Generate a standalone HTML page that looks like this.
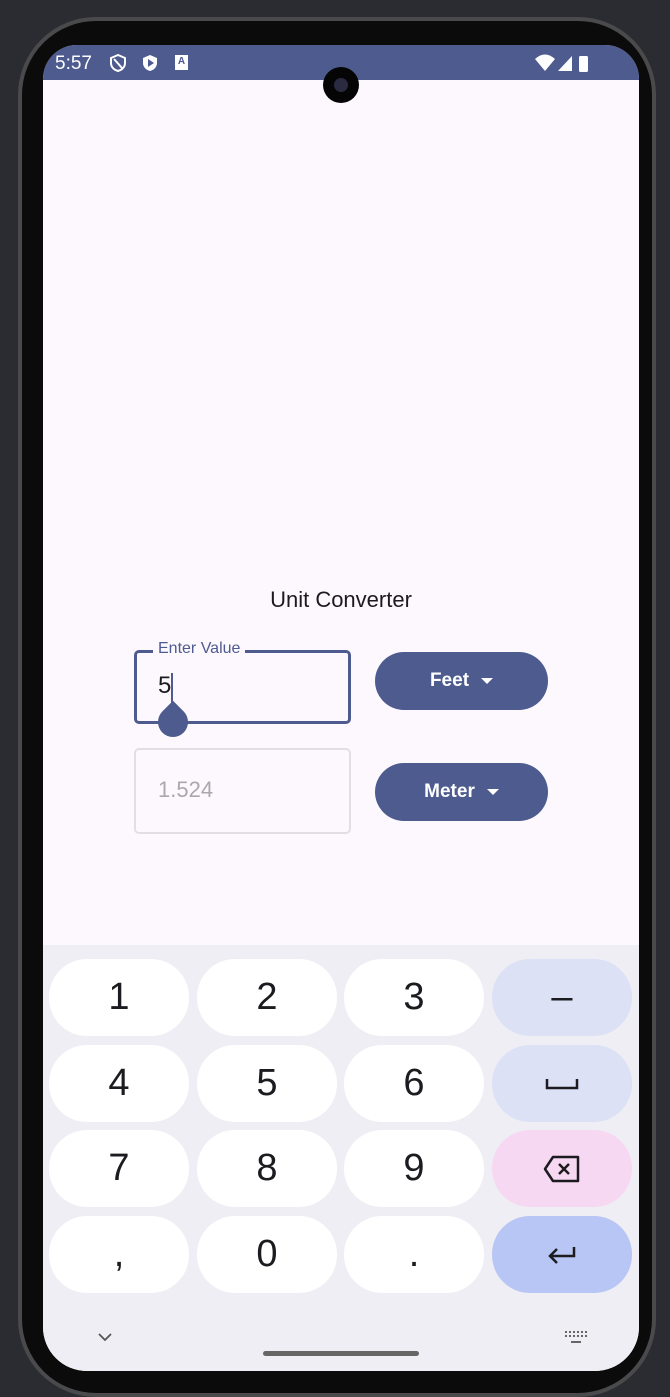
<!DOCTYPE html>
<html><head><style>
body{margin:0;width:670px;height:1396px;background:#2b2c31;position:relative;overflow:hidden;font-family:"Liberation Sans",sans-serif}
.frame{position:absolute;left:18px;top:17px;width:638px;height:1380px;border-radius:78px;background:#0b0b0c;border:4px solid #4a4a4c;box-sizing:border-box}
.screen{position:absolute;left:43px;top:45px;width:596px;height:1326px;border-radius:34px 34px 44px 44px;overflow:hidden;background:#fdf8fd}
.sb{position:absolute;left:0;top:0;width:596px;height:35px;background:#4d5b8f;color:#fff}
.kb{position:absolute;left:0;top:900px;width:596px;height:426px;background:#efeef4}
.k{position:absolute;width:140px;height:77px;border-radius:38px;background:#fff;display:flex;align-items:center;justify-content:center;font-size:38px;color:#1c1b1f}
.btn{position:absolute;left:332px;width:173px;height:58px;border-radius:29px;background:#4d5b8f;color:#fff;font-size:19px;font-weight:bold;display:flex;align-items:center;justify-content:center}
.tri{display:inline-block;margin-left:12px;border-left:6px solid transparent;border-right:6px solid transparent;border-top:6px solid #fff}
</style></head><body>
<div class="frame"></div>
<div class="screen">
 <div class="sb">
  <span style="position:absolute;left:12px;top:8px;font-size:19px">5:57</span>
  <svg style="position:absolute;left:66px;top:9px" width="18" height="18" viewBox="0 0 18 18"><path d="M9 1L2 4v5c0 4 3 7 7 8 4-1 7-4 7-8V4z" fill="none" stroke="#fff" stroke-width="2"/><path d="M5 5l8 9" stroke="#fff" stroke-width="2"/></svg>
  <svg style="position:absolute;left:98px;top:9px" width="18" height="18" viewBox="0 0 18 18"><path d="M9 1L2 4v5c0 4 3 7 7 8 4-1 7-4 7-8V4z" fill="#fff"/><path d="M7 5v8l6-4z" fill="#4d5b8f"/></svg>
  <div style="position:absolute;left:132px;top:10px;width:13px;height:15px;background:#fff;font-size:10px;color:#4d5b8f;font-weight:bold;text-align:center;line-height:14px">A</div>
  <svg style="position:absolute;left:491px;top:8px" width="60" height="20" viewBox="0 0 60 20"><path d="M1 6q10-9 20 0l-10 12z" fill="#fff"/><path d="M24 18L38 3v15z" fill="#fff"/><rect x="45" y="3" width="9" height="16" rx="1.5" fill="#fff"/></svg>
 </div>
 <div style="position:absolute;left:280px;top:22px;width:36px;height:36px;border-radius:50%;background:#050505"><div style="position:absolute;left:11px;top:11px;width:14px;height:14px;border-radius:50%;background:#2a2a40"></div></div>
 <div style="position:absolute;left:0;width:596px;top:542px;text-align:center;font-size:22px;color:#1c1b1f">Unit Converter</div>
 <div style="position:absolute;left:91px;top:605px;width:217px;height:74px;border:3px solid #4d5b8f;border-radius:5px;box-sizing:border-box"></div>
 <div style="position:absolute;left:110px;top:595px;padding:0 5px;background:#fdf8fd;color:#4d5b8f;font-size:16px">Enter Value</div>
 <div style="position:absolute;left:115px;top:627px;font-size:24px;color:#1c1b1f">5</div>
 <div style="position:absolute;left:128px;top:628px;width:2px;height:30px;background:#4d5b8f"></div>
 <div style="position:absolute;left:115px;top:662px;width:30px;height:30px;border-radius:50% 0 50% 50%;transform:rotate(-45deg);background:#4d5b8f"></div>
 <div style="position:absolute;left:91px;top:703px;width:217px;height:86px;border:2px solid #e2dfe4;border-radius:5px;box-sizing:border-box"></div>
 <div style="position:absolute;left:115px;top:732px;font-size:22px;color:#aaa8ad">1.524</div>
 <div class="btn" style="top:607px">Feet<span class="tri"></span></div>
 <div class="btn" style="top:718px">Meter<span class="tri"></span></div>
 <div class="kb">
  <div class="k" style="left:6px;top:14px">1</div><div class="k" style="left:154px;top:14px">2</div><div class="k" style="left:301px;top:14px">3</div><div class="k" style="left:449px;top:14px;background:#dce1f5">–</div>
  <div class="k" style="left:6px;top:100px">4</div><div class="k" style="left:154px;top:100px">5</div><div class="k" style="left:301px;top:100px">6</div><div class="k" style="left:449px;top:100px;background:#dce1f5"><svg width="34" height="14"><path d="M2 2v9h30V2" fill="none" stroke="#1c1b1f" stroke-width="2.5"/></svg></div>
  <div class="k" style="left:6px;top:185px">7</div><div class="k" style="left:154px;top:185px">8</div><div class="k" style="left:301px;top:185px">9</div><div class="k" style="left:449px;top:185px;background:#f7d8f3"><svg width="38" height="30" viewBox="0 0 38 30"><path d="M10 3h25v24H10L2 15z" fill="none" stroke="#1c1b1f" stroke-width="2.5" stroke-linejoin="round"/><path d="M16 10l10 10M26 10L16 20" stroke="#1c1b1f" stroke-width="2.5"/></svg></div>
  <div class="k" style="left:6px;top:271px">,</div><div class="k" style="left:154px;top:271px">0</div><div class="k" style="left:301px;top:271px">.</div><div class="k" style="left:449px;top:271px;background:#b8c6f5"><svg width="30" height="20" viewBox="0 0 30 20"><path d="M27 2v9H3M10 4l-7 7 7 7" fill="none" stroke="#1c1b1f" stroke-width="2.5"/></svg></div>
  <svg style="position:absolute;left:54px;top:387px" width="16" height="10"><path d="M2 2l6 6 6-6" fill="none" stroke="#555" stroke-width="1.8"/></svg>
  <svg style="position:absolute;left:522px;top:385px" width="22" height="14"><path d="M0 2h22M0 6h22" stroke="#666" stroke-width="2" stroke-dasharray="2 2"/><path d="M6 12h10" stroke="#666" stroke-width="2"/></svg>
  <div style="position:absolute;left:220px;top:406px;width:156px;height:5px;border-radius:3px;background:#666"></div>
 </div>
</div>
</body></html>
